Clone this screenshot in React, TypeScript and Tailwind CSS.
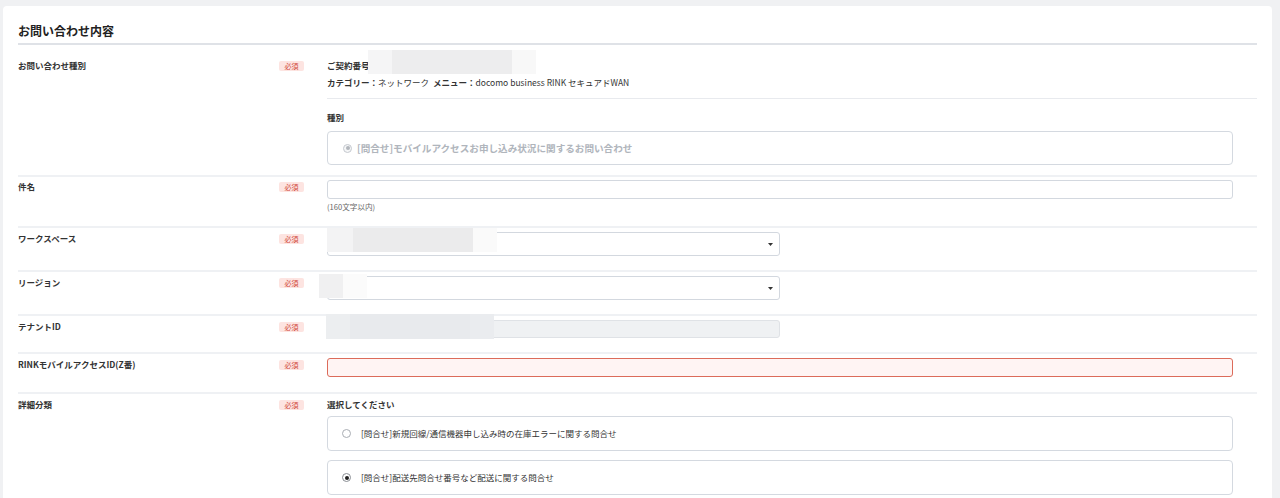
import type { ReactNode } from 'react';

const labelText = 'text-[8.5px] font-bold leading-[13px] text-[#333]';

function Badge() {
  return (
    <span className="mt-[2px] flex h-[10px] w-[25px] items-center justify-center rounded-[2px] bg-[#fde4e1] text-[7px] leading-none text-[#d0473a]">
      必須
    </span>
  );
}

interface RowProps {
  label: string;
  pad: string;
  children: ReactNode;
  last?: boolean;
}

function Row({ label, pad, children, last }: RowProps) {
  return (
    <div className={`flex ${pad} ${last ? '' : 'border-b-2 border-[#eff1f4]'}`}>
      <div className={`w-[261px] shrink-0 ${labelText}`}>{label}</div>
      <div className="w-[25px] shrink-0">
        <Badge />
      </div>
      <div className="relative ml-[23px] min-w-0 flex-1">{children}</div>
    </div>
  );
}

// redaction blocks laid over the values
function Mask({ pos, parts }: { pos: string; parts: { w: string; c: string }[] }) {
  return (
    <div className={`absolute flex ${pos}`}>
      {parts.map((p, i) => (
        <div key={i} className={`h-full ${p.w} ${p.c}`} />
      ))}
    </div>
  );
}

function Select() {
  return (
    <div className="relative h-[24px] w-[453px] rounded-[3px] border border-[#d3d8df] bg-white">
      <svg className="absolute right-[6px] top-[10px]" width="5" height="3" viewBox="0 0 5 3">
        <polygon points="0,0 5,0 2.5,3" fill="#333" />
      </svg>
    </div>
  );
}

function Radio({ checked }: { checked?: boolean }) {
  return (
    <span
      className={`flex h-[9px] w-[9px] shrink-0 items-center justify-center rounded-full border bg-white ${
        checked ? 'border-[#8a8e94]' : 'border-[#a9adb3]'
      }`}
    >
      {checked && <span className="h-[4px] w-[4px] rounded-full bg-[#222]" />}
    </span>
  );
}

function RadioBox({ label, checked }: { label: string; checked?: boolean }) {
  return (
    <div className="mr-[24px] flex h-[35px] items-center gap-[10px] rounded-[4px] border border-[#d4d9e0] pl-[14px]">
      <Radio checked={checked} />
      <span className="text-[8.5px] leading-[13px] text-[#333]">{label}</span>
    </div>
  );
}

export default function App() {
  return (
    <div className="min-h-screen bg-[#f0f1f3] pl-[3px] pr-[8px] pt-[6px] font-['Noto_Sans_CJK_JP','Noto_Sans',sans-serif]">
      <div className="rounded-t-[4px] bg-white px-[15px] pb-6 pt-[17px]">
        <h2 className="border-b-2 border-[#dfe2e7] pb-[4px] text-[12px] font-bold leading-[16px] text-[#222]">
          お問い合わせ内容
        </h2>

        <Row label="お問い合わせ種別" pad="pt-[14px] pb-[10px]">
          <div className="text-[8.5px] leading-[13px] text-[#333]">
            <div className="font-bold">ご契約番号</div>
            <div className="mt-[4px]">
              <span className="font-bold">カテゴリー：</span>ネットワーク
              <span className="ml-[4px] font-bold">メニュー：</span>docomo business RINK セキュアドWAN
            </div>
          </div>
          <div className="mt-[9px] border-t border-[#e8eaee]" />
          <div className={`mt-[12px] ${labelText}`}>種別</div>
          <div className="mr-[24px] mt-[7px] flex h-[34px] items-center gap-[5px] rounded-[4px] border border-[#d4d9e0] pl-[15px]">
            <span className="flex h-[9px] w-[9px] items-center justify-center rounded-full border border-[#c5c9cf] bg-[#f5f6f7]">
              <span className="h-[4px] w-[4px] rounded-full bg-[#b2b6bc]" />
            </span>
            <span className="text-[9.6px] font-bold leading-[13px] text-[#b0b5bc]">
              [問合せ]モバイルアクセスお申し込み状況に関するお問い合わせ
            </span>
          </div>
          <Mask
            pos="left-[41px] top-[-9px] h-[24px]"
            parts={[
              { w: 'w-[24px]', c: 'bg-[#f5f5f6]' },
              { w: 'w-[120px]', c: 'bg-[#ededee]' },
              { w: 'w-[24px]', c: 'bg-[#f8f8f8]' },
            ]}
          />
        </Row>

        <Row label="件名" pad="pt-[3px] pb-[13px]">
          <div className="mr-[24px] h-[19px] rounded-[3px] border border-[#d3d8df] bg-white" />
          <div className="mt-[2px] text-[7.6px] leading-[12px] text-[#666]">(160文字以内)</div>
        </Row>

        <Row label="ワークスペース" pad="pt-[4px] pb-[14px]">
          <Select />
          <Mask
            pos="left-0 top-[-4px] h-[24px]"
            parts={[
              { w: 'w-[26px]', c: 'bg-[#f3f3f4]' },
              { w: 'w-[120px]', c: 'bg-[#ebebec]' },
              { w: 'w-[24px]', c: 'bg-[#fafafa]' },
            ]}
          />
        </Row>

        <Row label="リージョン" pad="pt-[4px] pb-[14px]">
          <Select />
          <Mask
            pos="left-[-8px] top-[-2px] h-[24px]"
            parts={[
              { w: 'w-[24px]', c: 'bg-[#f0f0f1]' },
              { w: 'w-[24px]', c: 'bg-[#fbfbfb]' },
            ]}
          />
        </Row>

        <Row label="テナントID" pad="pt-[4px] pb-[14px]">
          <div className="h-[18px] w-[453px] rounded-[3px] border border-[#dfe2e6] bg-[#eff1f3]" />
          <Mask
            pos="left-[-1px] top-[-6px] h-[25px]"
            parts={[
              { w: 'w-[24px]', c: 'bg-[#eceef0]' },
              { w: 'w-[120px]', c: 'bg-[#e8eaed]' },
              { w: 'w-[24px]', c: 'bg-[#eaecef]' },
            ]}
          />
        </Row>

        <Row label="RINKモバイルアクセスID(Z番)" pad="pt-[4px] pb-[15px]">
          <div className="mr-[24px] h-[19px] rounded-[3px] border border-[#dc6b5a] bg-[#fff4f3]" />
        </Row>

        <Row label="詳細分類" pad="pt-[4px] pb-[8px]" last>
          <div className={labelText}>選択してください</div>
          <div className="mt-[5px] flex flex-col gap-[9px]">
            <RadioBox label="[問合せ]新規回線/通信機器申し込み時の在庫エラーに関する問合せ" />
            <RadioBox label="[問合せ]配送先問合せ番号など配送に関する問合せ" checked />
          </div>
        </Row>
      </div>
    </div>
  );
}
